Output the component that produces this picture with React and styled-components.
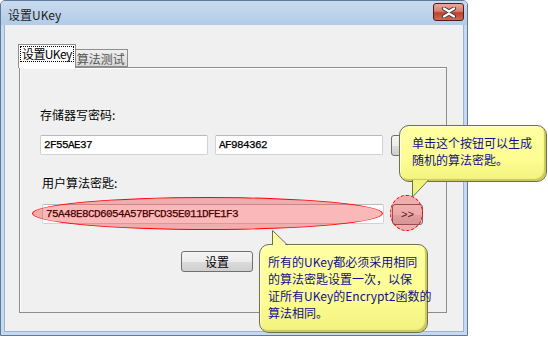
import React from "react";
import styled, { createGlobalStyle } from "styled-components";

const GlobalStyle = createGlobalStyle`
  body {
    margin: 0;
    background: #ffffff;
    font-family: "Noto Sans CJK SC", "Noto Sans", sans-serif;
    font-size: 12px;
  }
`;

function App() {
  return (
    <Page>
      <GlobalStyle />
      <Window>
        <TitleBar>
          <Title>设置UKey</Title>
          <CloseButton>
            <svg width="16" height="11" viewBox="0 0 16 11">
              <path
                d="M3 1.5 L8 4.5 L13 1.5 M3 9.5 L8 6.5 L13 9.5"
                stroke="#3a3a3a"
                strokeWidth="4"
                fill="none"
                strokeLinecap="round"
              />
              <path
                d="M3 1.5 L8 4.5 L13 1.5 M3 9.5 L8 6.5 L13 9.5"
                stroke="#ffffff"
                strokeWidth="2.2"
                fill="none"
                strokeLinecap="round"
              />
            </svg>
          </CloseButton>
        </TitleBar>
        <Client>
          <Tabs>
            <Tab active>
              <FocusText>设置UKey</FocusText>
            </Tab>
            <Tab>算法测试</Tab>
          </Tabs>
          <Panel>
            <Label>存储器写密码:</Label>
            <Row>
              <Input>2F55AE37</Input>
              <Input>AF984362</Input>
              <SmallButton>&gt;&gt;</SmallButton>
            </Row>
            <Label second>用户算法密匙:</Label>
            <Row second>
              <Input wide>75A48E8CD6054A57BFCD35E011DFE1F3</Input>
              <SmallButton>&gt;&gt;</SmallButton>
            </Row>
            <Button>设置</Button>
          </Panel>
        </Client>
      </Window>

      <Highlight left={32} top={197} width={351} height={33} />
      <Highlight left={390} top={195} width={33} height={36} dashed />

      <Tooltip left={399} top={125} width={148} height={57} padTop={8} padLeft={12}>
        <TailDown width="18" height="19" viewBox="0 0 18 19">
          <polygon points="0.5,0 0.5,17 16.5,0" fill="#f2f27e" />
          <polyline points="0.5,0 0.5,17 16.5,0" fill="none" stroke="#6f6f4a" />
        </TailDown>
        单击这个按钮可以生成
        <br />
        随机的算法密匙。
      </Tooltip>

      <Tooltip left={259} top={244} width={169} height={89} padTop={8} padLeft={8}>
        <TailUp width="18" height="17" viewBox="0 0 18 17">
          <polygon points="0.5,0.5 0.5,17 15.5,17" fill="#ffffa2" />
          <polyline points="0.5,15 0.5,0.5 15.5,15" fill="none" stroke="#6f6f4a" />
        </TailUp>
        所有的UKey都必须采用相同
        <br />
        的算法密匙设置一次，以保
        <br />
        证所有UKey的Encrypt2函数的
        <br />
        算法相同。
      </Tooltip>
    </Page>
  );
}

const Page = styled.div`
  position: relative;
  width: 548px;
  height: 337px;
  overflow: hidden;
`;

const Window = styled.div`
  width: 468px;
  height: 336px;
  box-sizing: border-box;
  border: 1px solid #5f7a98;
  border-radius: 5px 5px 0 0;
  background: #c5daf0;
  display: flex;
  flex-direction: column;
`;

const TitleBar = styled.div`
  height: 24px;
  display: flex;
  align-items: center;
  justify-content: space-between;
  padding: 0 3px 0 7px;
  background: linear-gradient(#c9dbef, #b3cbe7);
  border-radius: 4px 4px 0 0;
`;

const Title = styled.span`
  font-size: 12px;
  color: #1e1e1e;
  padding-top: 2px;
`;

const CloseButton = styled.div`
  width: 31px;
  height: 18px;
  box-sizing: border-box;
  margin-top: -2px;
  border: 1px solid #4a1e1e;
  border-radius: 3px;
  background: linear-gradient(#e8aa9c, #d8806f 45%, #c0402f 55%, #d06a52);
  display: flex;
  align-items: center;
  justify-content: center;
`;

const Client = styled.div`
  flex: 1;
  margin: 0 3px 3px;
  background: #f0f0f0;
  padding: 19px 16px 18px 14px;
  display: flex;
  flex-direction: column;
  border: 1px solid #9fb4cc;
  border-top: none;
  box-sizing: border-box;
`;

const Tabs = styled.div`
  display: flex;
  align-items: flex-end;
  height: 23px;
  margin-left: -1px;
`;

const Tab = styled.div`
  box-sizing: border-box;
  height: ${(p) => (p.active ? "24px" : "18px")};
  margin-bottom: ${(p) => (p.active ? "-1px" : "0")};
  padding: ${(p) => (p.active ? "1px 1px 0" : "0 2px 0 1px")};
  border: 1px solid #8d8d8d;
  border-bottom: ${(p) => (p.active ? "none" : "1px solid #8d8d8d")};
  border-left: ${(p) => (p.active ? "1px solid #8d8d8d" : "none")};
  background: ${(p) => (p.active ? "#ffffff" : "linear-gradient(#f0f0f0, #d8d8d8)")};
  color: ${(p) => (p.active ? "#000000" : "#555555")};
  font-size: 12px;
  line-height: 15px;
  display: flex;
  align-items: ${(p) => (p.active ? "flex-start" : "center")};
  white-space: nowrap;
  position: relative;
  z-index: ${(p) => (p.active ? 2 : 1)};
`;

const FocusText = styled.span`
  border: 1px dotted #000000;
  padding: 0 1px;
  line-height: 14px;
  font-size: 12px;
  letter-spacing: -0.6px;
`;

const Panel = styled.div`
  flex: 1;
  border: 1px solid #8d8d8d;
  background: #f0f0f0;
  padding: 39px 0 0 20px;
  display: flex;
  flex-direction: column;
  align-items: flex-start;
  box-shadow: inset 1px 1px 0 #ffffff;
`;

const Label = styled.div`
  font-size: 12px;
  line-height: 16px;
  color: #000000;
  margin-top: ${(p) => (p.second ? "19px" : "0")};
  margin-left: ${(p) => (p.second ? "2px" : "0")};
`;

const Row = styled.div`
  display: flex;
  gap: 7px;
  margin-top: ${(p) => (p.second ? "13px" : "12px")};
  margin-left: ${(p) => (p.second ? "2px" : "0")};
`;

const Input = styled.div`
  box-sizing: border-box;
  width: ${(p) => (p.wide ? "342px" : "168px")};
  height: 20px;
  background: #ffffff;
  border: 1px solid #cfd3d8;
  border-top-color: #b6bac0;
  border-radius: 2px;
  padding: 0 3px;
  font-family: "Liberation Mono", monospace;
  font-size: 11px;
  letter-spacing: -0.6px;
  line-height: 18px;
  color: #000000;
  -webkit-text-stroke: 0.25px #000000;
`;

const SmallButton = styled.div`
  box-sizing: border-box;
  width: 31px;
  height: 21px;
  margin-left: 1px;
  border: 1px solid #707070;
  border-radius: 3px;
  background: linear-gradient(#f4f4f4, #ececec 50%, #dcdcdc 51%, #cfcfcf);
  font-family: "Liberation Mono", monospace;
  font-size: 11px;
  color: #222222;
  display: flex;
  align-items: center;
  justify-content: center;
`;

const Button = styled.div`
  box-sizing: border-box;
  width: 72px;
  height: 21px;
  margin: 26px 0 0 141px;
  border: 1px solid #707070;
  border-radius: 3px;
  background: linear-gradient(#f4f4f4, #ececec 50%, #dcdcdc 51%, #cfcfcf);
  font-size: 12px;
  color: #000000;
  display: flex;
  align-items: center;
  justify-content: center;
`;

const Highlight = styled.div`
  position: absolute;
  left: ${(p) => p.left}px;
  top: ${(p) => p.top}px;
  width: ${(p) => p.width}px;
  height: ${(p) => p.height}px;
  box-sizing: border-box;
  border: 1px ${(p) => (p.dashed ? "dashed" : "solid")} #ff0000;
  border-radius: 50%;
  background: rgba(240, 0, 0, 0.28);
`;

const Tooltip = styled.div`
  position: absolute;
  left: ${(p) => p.left}px;
  top: ${(p) => p.top}px;
  width: ${(p) => p.width}px;
  height: ${(p) => p.height}px;
  box-sizing: border-box;
  padding: ${(p) => p.padTop}px 0 0 ${(p) => p.padLeft}px;
  border: 1px solid #6f6f4a;
  border-radius: 10px;
  background: linear-gradient(#ffffa2, #fdfd92 60%, #f2f27e);
  box-shadow: inset -2px -2px 1px #c9c95c, inset 1px 1px 0 #ffffd8;
  color: #10108a;
  font-size: 12px;
  line-height: 17px;
  white-space: nowrap;
`;

const TailDown = styled.svg`
  position: absolute;
  left: 12px;
  top: 54px;
  display: block;
`;

const TailUp = styled.svg`
  position: absolute;
  left: 12px;
  top: -15px;
  display: block;
`;

export default App;
